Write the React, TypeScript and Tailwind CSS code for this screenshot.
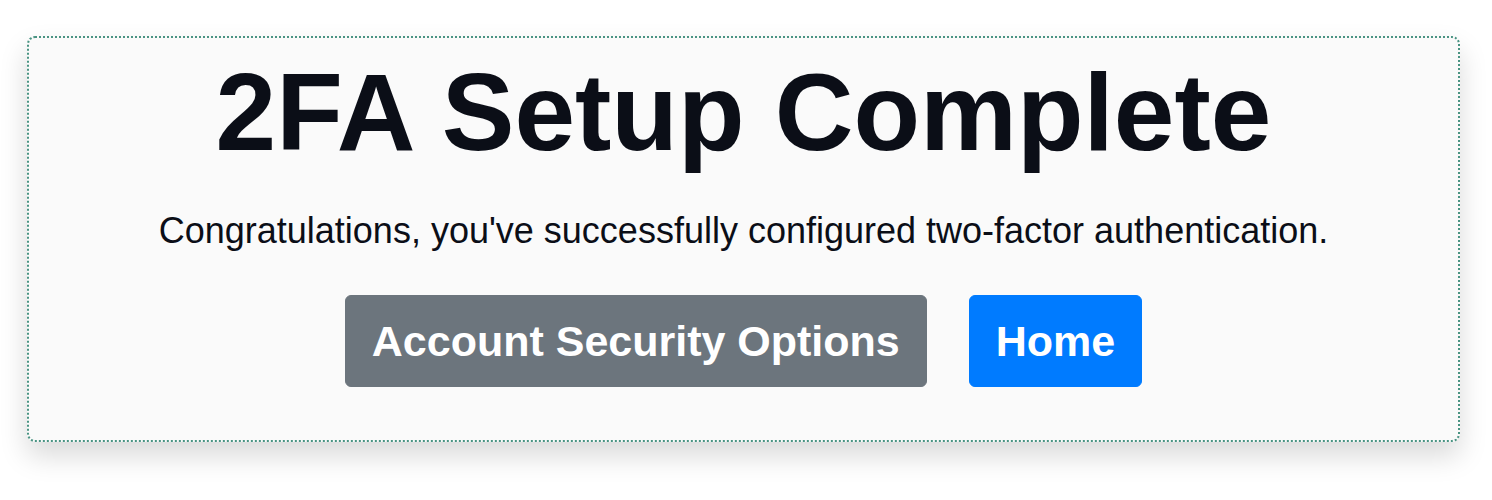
export default function App() {
  return (
    <div className="min-h-[500px] bg-white pt-[36px]" style={{ fontFamily: '"Liberation Sans", Arial, sans-serif' }}>
      <div className="ml-[27px] w-[1433px] rounded-[8px] border-2 border-dotted border-[#4a9483] bg-[#fafafa] px-6 pt-[9px] pb-[53px] text-center shadow-[0_14px_28px_rgba(0,0,0,0.15)]">
        <h1 className="text-[109px] font-bold leading-[1.2] text-[#0b0e17]">2FA Setup Complete</h1>
        <p className="mt-[26px] text-[36px] leading-[1.5] text-[#0b0e17]">
          Congratulations, you've successfully configured two-factor authentication.
        </p>
        <div className="mt-[37px] flex justify-center gap-[42px]">
          <button className="rounded-[6px] border border-[#6c757d] bg-[#6c757d] px-[26px] py-[13px] text-[43px] font-bold leading-[1.5] text-white">
            Account Security Options
          </button>
          <button className="rounded-[6px] border border-[#007bff] bg-[#007bff] px-[26px] py-[13px] text-[43px] font-bold leading-[1.5] text-white">
            Home
          </button>
        </div>
      </div>
    </div>
  )
}
